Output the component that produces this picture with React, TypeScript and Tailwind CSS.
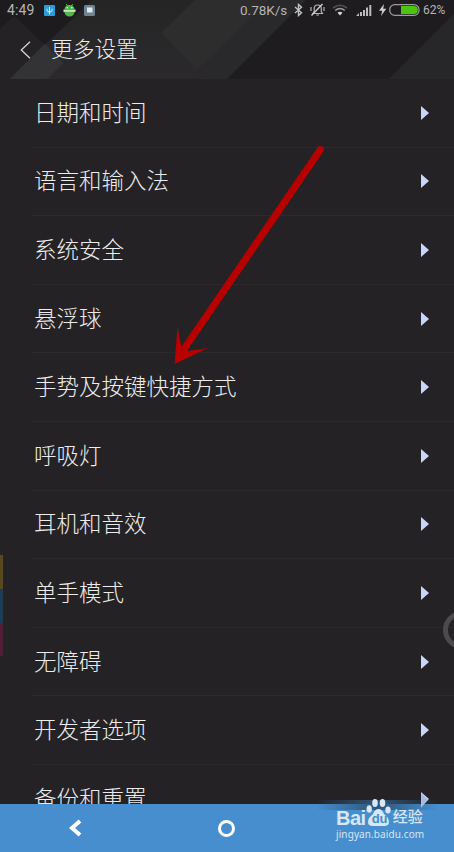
interface SettingRowProps {
  label: string;
}

const settings = [
  '日期和时间',
  '语言和输入法',
  '系统安全',
  '悬浮球',
  '手势及按键快捷方式',
  '呼吸灯',
  '耳机和音效',
  '单手模式',
  '无障碍',
  '开发者选项',
  '备份和重置',
];

function HeaderBackground() {
  return (
    <svg className="absolute inset-0" width="454" height="79" viewBox="0 0 454 79">
      <defs>
        <linearGradient id="band" x1="0" y1="0" x2="0" y2="1">
          <stop offset="0" stopColor="#252525" />
          <stop offset="1" stopColor="#2b292c" />
        </linearGradient>
      </defs>
      <rect width="454" height="79" fill="#242225" />
      <path d="M0 0H92L46 46L14 16L0 29Z" fill="#1d1b1e" />
      <path d="M92 0H306L227 79H10L46 44Z" fill="url(#band)" />
      <path d="M10 79L45 44L63 63L47 79Z" fill="#333235" />
      <path d="M45 44L63 63L47 79H10Z" fill="#333235" />
      <path d="M161 33L195 0H306L197 70Z" fill="#2d2d2d" />
      <path d="M197 70L227 41L268 0H306L227 79H206Z" fill="#29282b" />
      <path d="M306 0H454V14L389 79H227Z" fill="#1e1c1f" />
      <path d="M454 14V79H389Z" fill="#272628" />
    </svg>
  );
}

function StatusBar() {
  return (
    <div className="relative flex h-5 items-center text-[13px] leading-5 text-[#b4b4b4]">
      <span className="ml-[7px] w-[37px] text-[14px] tracking-[0.1px]">4:49</span>
      <svg width="11" height="11" viewBox="0 0 11 11">
        <rect width="11" height="11" rx="1" fill="#2d9bd8" />
        <path d="M5.5 2V9.5M3 3.8V5.5Q3 7 5.5 7Q8 7 8 5.5V3.8" fill="none" stroke="#d9f1ff" />
      </svg>
      <svg className="ml-2" width="13" height="14" viewBox="0 0 13 14">
        <path d="M3.3 1L4.5 3M9.7 1L8.5 3" stroke="#58b84d" />
        <path d="M1.4 6.3Q2 2 6.5 2Q11 2 11.6 6.3Z" fill="#50b847" />
        <path d="M.5 6.5H12.5V9H.5Z" fill="#c8e8c2" />
        <path d="M1.4 8.7H11.6Q11 13.5 6.5 13.5Q2 13.5 1.4 8.7Z" fill="#50b847" />
        <circle cx="4.2" cy="4.8" r=".8" fill="#fff" />
        <circle cx="8.8" cy="4.8" r=".8" fill="#fff" />
      </svg>
      <svg className="ml-2" width="11" height="11" viewBox="0 0 11 11">
        <rect width="11" height="11" rx="1.5" fill="#6f8392" />
        <rect x="3" y="2.5" width="5.5" height="5" fill="#e2e8ec" />
      </svg>
      <span className="ml-[145px] w-[54px] whitespace-nowrap text-[13.5px]">0.78K/s</span>
      <svg width="9" height="14" viewBox="0 0 9 14">
        <path d="M1 4L7.5 9.7L4.5 12.5V1.5L7.5 4.3L1 10" fill="none" stroke="#c2c2c2" strokeWidth="1.4" />
      </svg>
      <svg className="ml-[7px]" width="15" height="14" viewBox="0 0 15 14">
        <path d="M3 10.5H12.5L11.3 8.5V5.5Q11.3 2 7.7 2Q4.2 2 4.2 5.5V8.5ZM6.3 12H9M1 4V8M14 4V8" fill="none" stroke="#b4b4b4" strokeWidth="1.2" />
        <path d="M1.5 12.5L12.5 1" stroke="#d0d0d0" strokeWidth="1.3" />
      </svg>
      <svg className="ml-[7px]" width="16" height="12" viewBox="0 0 16 12">
        <path d="M1 4Q8-1.5 15 4" fill="none" stroke="#505050" strokeWidth="1.6" />
        <path d="M3.2 6.5Q8 2.5 12.8 6.5" fill="none" stroke="#9a9a9a" strokeWidth="1.6" />
        <path d="M5.5 8.7Q8 6.7 10.5 8.7L8 11.5Z" fill="#d5d5d5" />
      </svg>
      <svg className="ml-2" width="16" height="12" viewBox="0 0 16 12">
        <path d="M0 12L3 9V12ZM4 8H6V12H4ZM7 6H9V12H7ZM10 3.5H12V12H10ZM13.3 1H15.3V12H13.3Z" fill="#bbb" />
      </svg>
      <svg className="ml-[7px]" width="8" height="12" viewBox="0 0 8 12">
        <path d="M5 0L0 6.7H3.3L2 12L7.3 4.8H4.2Z" fill="#d0d0d0" />
      </svg>
      <svg className="ml-[2px]" width="31" height="12" viewBox="0 0 31 12">
        <rect x=".7" y=".7" width="29.3" height="10.6" rx="5" fill="none" stroke="#9b9b9b" strokeWidth="1.3" />
        <path d="M12 2H25Q28.8 2 28.8 6Q28.8 10 25 10H12Z" fill="#4ac40c" />
      </svg>
      <span className="ml-[3px] text-[12px]">62%</span>
    </div>
  );
}

function SettingRow({ label }: SettingRowProps) {
  return (
    <div className="ml-8 flex h-[68.6px] shrink-0 items-center justify-between border-b border-[#2b292c] pr-[25px] pl-[2px]">
      <span className="text-[22.5px] leading-8 font-light">{label}</span>
      <svg className="shrink-0" width="8" height="14" viewBox="0 0 8 14">
        <path d="M0 0L8 7L0 14Z" fill="#cbd5fb" />
      </svg>
    </div>
  );
}

function Watermark() {
  return (
    <div className="absolute top-[796px] left-[336px] h-[48px] w-[92px] text-[#d7e7f5]">
      <div className="flex h-[32px] items-end">
        <span className="font-['Liberation_Sans'] text-[20px] leading-[20px] font-bold tracking-[-0.5px]">Bai</span>
        <div className="relative h-[31px] w-[25px]">
          <svg className="absolute inset-0" width="25" height="31" viewBox="0 0 25 31">
            <g fill="currentColor">
              <ellipse cx="9" cy="6" rx="2.8" ry="4" />
              <ellipse cx="16.5" cy="6" rx="2.8" ry="4" />
              <ellipse cx="3.2" cy="12" rx="2.7" ry="3.8" />
              <ellipse cx="22" cy="13" rx="2.7" ry="3.6" />
              <path d="M12.5 12Q16 12 18 17L22 21Q25 28 19 29H6Q0 28 3 21L7 17Q9 12 12.5 12Z" />
            </g>
          </svg>
          <span className="absolute top-[15px] left-[6px] font-['Liberation_Sans'] text-[13px] leading-[13px] font-bold text-[#468dcb]">du</span>
        </div>
        <span className="ml-[2px] text-[15px] leading-[22px] font-medium whitespace-nowrap">经验</span>
      </div>
      <div className="-mt-px font-['Noto_Sans'] text-[10px] leading-[14px] tracking-[0.1px] whitespace-nowrap">jingyan.baidu.com</div>
    </div>
  );
}

export default function App() {
  return (
    <div className="relative flex h-[852px] w-[454px] flex-col overflow-hidden bg-[#242225] font-['Roboto','Noto_Sans_CJK_SC',sans-serif] text-[#ececec]">
      <header className="relative h-[79px] shrink-0">
        <HeaderBackground />
        <StatusBar />
        <div className="relative flex h-[60px] items-center pl-5">
          <svg width="11" height="18" viewBox="0 0 11 18">
            <path d="M10 .7L1.3 9L10 17.3" fill="none" stroke="#d5d5d5" strokeWidth="1.3" />
          </svg>
          <h1 className="ml-5 text-[21.7px] leading-8 font-light">更多设置</h1>
        </div>
      </header>

      <main className="flex min-h-0 flex-1 flex-col overflow-hidden">
        {settings.map((label) => (
          <SettingRow key={label} label={label} />
        ))}
      </main>

      <nav className="flex h-12 shrink-0 items-center bg-[#468ecd]">
        <svg className="ml-[69px]" width="14" height="18" viewBox="0 0 14 18">
          <path d="M11 2L3 9L11 16" fill="none" stroke="#fff" strokeWidth="4" />
        </svg>
        <div className="ml-[135px] h-[17px] w-[17px] rounded-full border-[3px] border-white" />
      </nav>

      {/* side colour tabs */}
      <div className="absolute top-[555px] left-0 w-[3px]">
        <div className="h-[34px] bg-[#57481f]" />
        <div className="h-[34px] bg-[#1c3d55]" />
        <div className="h-[33px] bg-[#501f38]" />
      </div>

      {/* floating ball, half off screen */}
      <div className="absolute top-[611px] left-[443px] h-[38px] w-[38px] rounded-full border-[5px] border-[#4b4a4c]" />

      <svg className="absolute top-[140px] left-[165px]" width="170" height="230" viewBox="165 140 170 230">
        <path d="M320.5 149.5L184 349" stroke="#b90000" strokeWidth="7" strokeLinecap="round" />
        <path d="M174.5 364L177.5 327L181.5 347L188 351L208 348Z" fill="#b90000" />
      </svg>

      <div className="absolute top-[800px] left-[316px] h-[10px] w-[122px] bg-linear-to-r from-[#468ecd]/0 via-[#2f5679] to-[#468ecd]/0" />
      <svg className="absolute top-[793px] left-[421px]" width="8" height="15" viewBox="0 0 8 15">
        <path d="M0 0L7 7L0 15Z" fill="#a7bce0" />
      </svg>
      <Watermark />
    </div>
  );
}
